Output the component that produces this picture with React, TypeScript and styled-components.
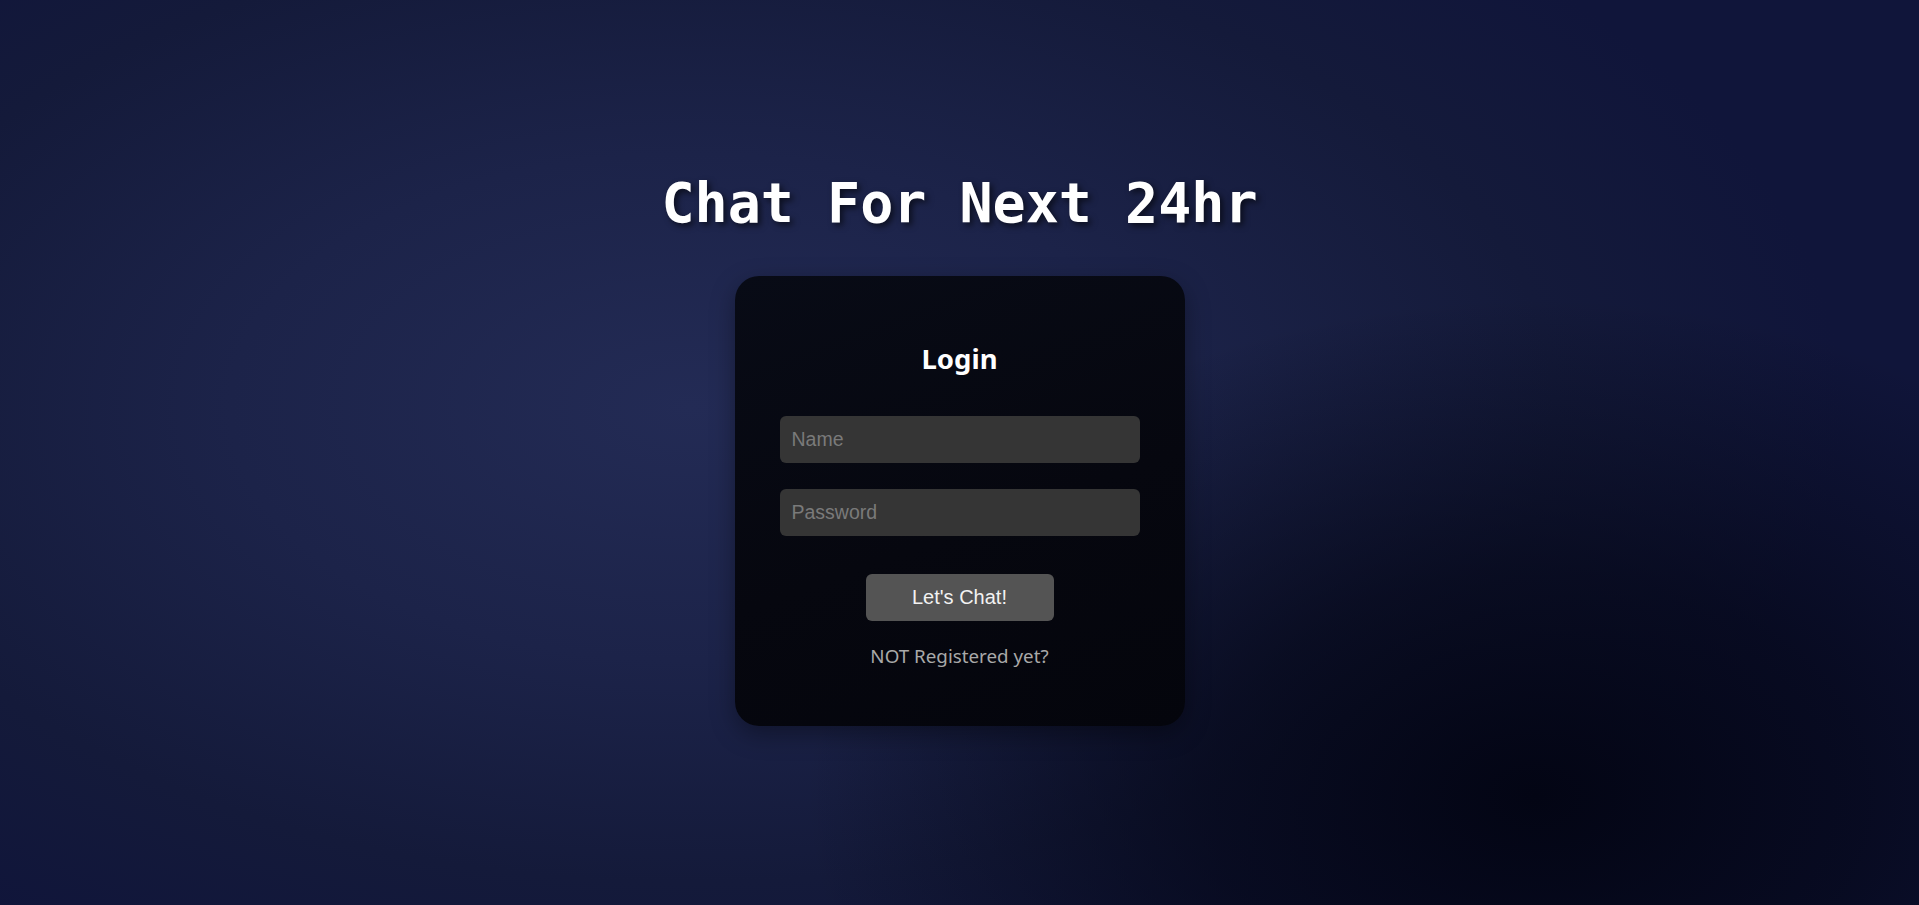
import styled, { createGlobalStyle } from "styled-components";

const GlobalStyle = createGlobalStyle`
  * {
    box-sizing: border-box;
  }
  html,
  body {
    margin: 0;
    padding: 0;
    height: 100%;
  }
  body {
    font-family: "Noto Sans", "Liberation Sans", sans-serif;
    background-color: #121735;
  }
`;

const Page = styled.div`
  min-height: 100vh;
  display: flex;
  flex-direction: column;
  align-items: center;
  padding-top: 171px;
  background:
    radial-gradient(ellipse 38% 55% at 80% 88%, rgba(3, 5, 20, 1) 0%, rgba(3, 5, 20, 0.65) 45%, rgba(3, 5, 20, 0) 100%),
    radial-gradient(ellipse 60% 70% at 36% 45%, #232b55 0%, #1c2349 40%, #141a3a 75%, #10153a 100%);
  background-color: #121735;
`;

const Title = styled.h1`
  margin: 0 0 41px;
  font-family: "DejaVu Sans Mono", "Liberation Mono", monospace;
  font-weight: 700;
  font-size: 55px;
  line-height: 64px;
  color: #ffffff;
  text-shadow: 3px 3px 6px rgba(0, 0, 0, 0.6);
`;

const Card = styled.form`
  width: 450px;
  height: 450px;
  padding-top: 67px;
  display: flex;
  flex-direction: column;
  align-items: center;
  border-radius: 24px;
  background: linear-gradient(160deg, #080b16 0%, #06070f 55%, #04050c 100%);
  box-shadow: 0 8px 24px rgba(0, 0, 0, 0.35);
`;

const Heading = styled.h2`
  margin: 0 0 41px;
  font-family: "Noto Sans", "Open Sans", sans-serif;
  font-weight: 700;
  font-size: 27.5px;
  line-height: 32px;
  color: #ffffff;
`;

const Input = styled.input`
  width: 80%;
  height: 47px;
  margin-bottom: ${props => (props.type === "password" ? "38px" : "26px")};
  padding: 0 12px;
  border: none;
  border-radius: 6px;
  background-color: #353535;
  color: #e0e0e0;
  font-family: "Liberation Sans", Arial, sans-serif;
  font-size: 19.5px;
  outline: none;

  &::placeholder {
    color: #7a7a7a;
  }
`;

const Button = styled.button`
  width: 188px;
  height: 47px;
  margin-bottom: 23px;
  border: none;
  border-radius: 6px;
  background-color: #545454;
  color: #f2f2f2;
  font-family: "Liberation Sans", Arial, sans-serif;
  font-size: 20px;
  cursor: pointer;
`;

const RegisterLink = styled.a`
  font-family: "Noto Sans", "Open Sans", sans-serif;
  font-size: 18.8px;
  line-height: 24px;
  color: #a9a9a9;
  text-decoration: none;
  cursor: pointer;
`;

function App() {
  return (
    <Page>
      <GlobalStyle />
      <Title>Chat For Next 24hr</Title>
      <Card onSubmit={e => e.preventDefault()}>
        <Heading>Login</Heading>
        <Input type="text" placeholder="Name" />
        <Input type="password" placeholder="Password" />
        <Button type="submit">Let's Chat!</Button>
        <RegisterLink>NOT Registered yet?</RegisterLink>
      </Card>
    </Page>
  );
}

export default App;
